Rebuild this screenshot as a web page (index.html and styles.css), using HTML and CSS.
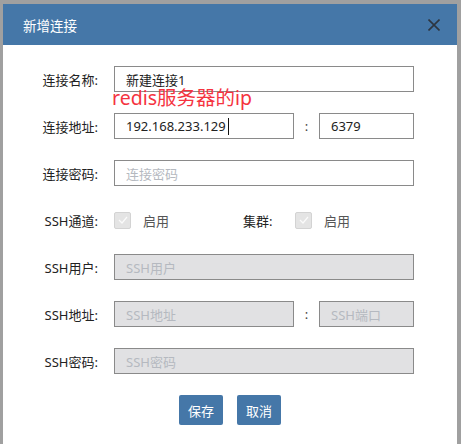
FILE: index.html
```html
<!DOCTYPE html>
<html lang="zh-CN">
<head>
<meta charset="utf-8">
<title>新增连接</title>
<link rel="stylesheet" href="styles.css">
</head>
<body>
<div class="dialog">
  <div class="header">
    <span class="title">新增连接</span>
    <svg class="close" width="12" height="12" viewBox="0 0 12 12"><path d="M0.5 0.5 L11.5 11.5 M11.5 0.5 L0.5 11.5" stroke="#2d3540" stroke-width="1.6" fill="none"/></svg>
  </div>
  <div class="form">
    <div class="row">
      <span class="label">连接名称:</span>
      <div class="inp w-full">新建连接1</div>
    </div>
    <div class="row">
      <span class="label">连接地址:</span>
      <div class="inp w-addr"><span class="caret">192.168.233.129</span></div>
      <span class="colon">:</span>
      <div class="inp w-port">6379</div>
    </div>
    <div class="row">
      <span class="label">连接密码:</span>
      <div class="inp w-full ph">连接密码</div>
    </div>
    <div class="row">
      <span class="label">SSH通道:</span>
      <div class="check-group">
        <span class="cb"><svg width="10" height="8" viewBox="0 0 10 8"><path d="M1 4 L4 7 L9 1" stroke="#fbfbfb" stroke-width="1.2" fill="none"/></svg></span>
        <span class="cb-text">启用</span>
      </div>
      <span class="sub-label">集群:</span>
      <span class="cb"><svg width="10" height="8" viewBox="0 0 10 8"><path d="M1 4 L4 7 L9 1" stroke="#fbfbfb" stroke-width="1.2" fill="none"/></svg></span>
      <span class="cb-text">启用</span>
    </div>
    <div class="row">
      <span class="label">SSH用户:</span>
      <div class="inp w-full dis ph">SSH用户</div>
    </div>
    <div class="row">
      <span class="label">SSH地址:</span>
      <div class="inp w-addr dis ph">SSH地址</div>
      <span class="colon">:</span>
      <div class="inp w-port dis ph">SSH端口</div>
    </div>
    <div class="row">
      <span class="label">SSH密码:</span>
      <div class="inp w-full dis ph">SSH密码</div>
    </div>
    <div class="buttons">
      <button class="btn">保存</button>
      <button class="btn">取消</button>
    </div>
  </div>
  <div class="annotation">redis服务器的ip</div>
</div>
</body>
</html>
```
FILE: styles.css
```css
html, body {
  margin: 0;
  padding: 0;
}
body {
  background: #a0a0a0;
  width: 461px;
  height: 444px;
  overflow: hidden;
  font-family: "Noto Sans", "Noto Sans CJK SC", sans-serif;
  font-size: 13px;
  color: #222;
}
.dialog {
  position: relative;
  margin: 4px 0 0 3px;
  width: 454px;
  height: 440px;
  background: #fff;
}
.header {
  height: 41px;
  background: #4577a8;
  display: flex;
  align-items: center;
  justify-content: space-between;
  padding: 0 17px 0 20px;
}
.title {
  color: #fff;
  font-size: 13.5px;
}
.close {
  display: block;
  margin-top: 1px;
}
.form {
  padding-top: 21px;
}
.row {
  display: flex;
  align-items: center;
  height: 26px;
  margin-bottom: 21px;
}
.label {
  flex: none;
  width: 95px;
  margin-right: 16px;
  text-align: right;
  color: #222;
}
.inp {
  box-sizing: border-box;
  height: 26px;
  border: 1px solid #8a8a8a;
  padding: 0 0 0 11px;
  display: flex;
  align-items: center;
  background: #fff;
  color: #222;
  white-space: nowrap;
}
.w-full { width: 300px; }
.w-addr { width: 180px; }
.w-port { width: 95px; }
.colon {
  width: 25px;
  text-align: center;
  color: #444;
}
.ph { color: #b5b9c0; }
.dis { background: #e1e1e3; }
.caret {
  border-right: 1px solid #111;
  padding-right: 2px;
  line-height: 17px;
}
.check-group {
  display: flex;
  align-items: center;
  width: 129px;
}
.cb {
  box-sizing: border-box;
  width: 17px;
  height: 17px;
  border: 1px solid #d3d3d3;
  border-radius: 2px;
  background: #e4e4e4;
  display: flex;
  align-items: center;
  justify-content: center;
  flex: none;
}
.cb-text {
  margin-left: 12px;
  color: #555;
}
.sub-label {
  width: 52px;
  color: #222;
}
.buttons {
  display: flex;
  justify-content: center;
  gap: 14px;
}
.btn {
  width: 44px;
  height: 30px;
  border: none;
  border-radius: 2px;
  background: #4577a8;
  color: #fff;
  font-family: inherit;
  font-size: 13px;
  padding: 0;
}
.annotation {
  position: absolute;
  left: 109px;
  top: 83px;
  font-size: 19.5px;
  line-height: 22px;
  color: #f5333f;
}
```
